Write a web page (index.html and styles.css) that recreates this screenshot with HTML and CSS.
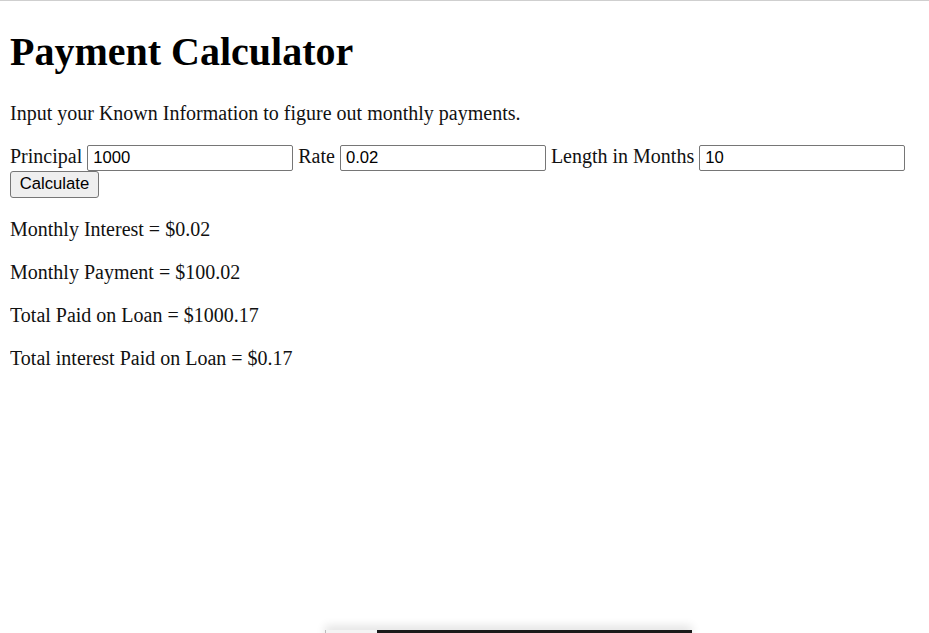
FILE: index.html
```html
<!DOCTYPE html>
<html lang="en">
<head>
<meta charset="utf-8">
<title>Payment Calculator</title>
<link rel="stylesheet" href="styles.css">
</head>
<body>
<h1 class="title">Payment Calculator</h1>
<p class="intro">Input your Known Information to figure out monthly payments.</p>
<form class="calc">
Principal <input class="field" type="text" value="1000"> Rate <input class="field" type="text" value="0.02"> Length in Months <input class="field" type="text" value="10"><br>
<button class="btn" type="button">Calculate</button>
</form>
<p class="result">Monthly Interest = $0.02</p>
<p class="result">Monthly Payment = $100.02</p>
<p class="result">Total Paid on Loan = $1000.17</p>
<p class="result">Total interest Paid on Loan = $0.17</p>
<div class="dock"><span class="dock-light"></span><span class="dock-dark"></span></div>
</body>
</html>
```
FILE: styles.css
```css
html {
  border-top: 1px solid #cfcfcf;
  background: #fff;
}
body {
  margin: 10px;
  font-family: "Liberation Serif", "Times New Roman", serif;
  font-size: 20px;
  color: #111;
}
.title {
  font-size: 40px;
  font-weight: bold;
  margin: 16.8px 0 26.8px;
  color: #000;
}
.intro, .result {
  margin: 20px 0;
}
.calc {
  margin: 0 0 4px;
  line-height: 1.15;
}
.field {
  box-sizing: border-box;
  width: 206px;
  height: 26px;
  padding: 1px 5px;
  border: 1px solid #767676;
  border-radius: 2px;
  font-family: "Liberation Sans", Arial, sans-serif;
  font-size: 16.67px;
  color: #000;
  background: #fff;
}
.btn {
  box-sizing: border-box;
  width: 89px;
  height: 27px;
  padding: 0 8px;
  border: 1px solid #767676;
  border-radius: 3px;
  background: #efefef;
  font-family: "Liberation Sans", Arial, sans-serif;
  font-size: 16.67px;
  color: #000;
}
.dock {
  position: fixed;
  top: 630px;
  left: 325px;
  width: 367px;
  height: 10px;
  display: flex;
  box-shadow: 0 -4px 10px rgba(0,0,0,0.12);
}
.dock-light {
  width: 51px;
  background: #f4f4f4;
  border-left: 1px solid #bbb;
}
.dock-dark {
  flex: 1;
  background: #1a1a1a;
}
```
